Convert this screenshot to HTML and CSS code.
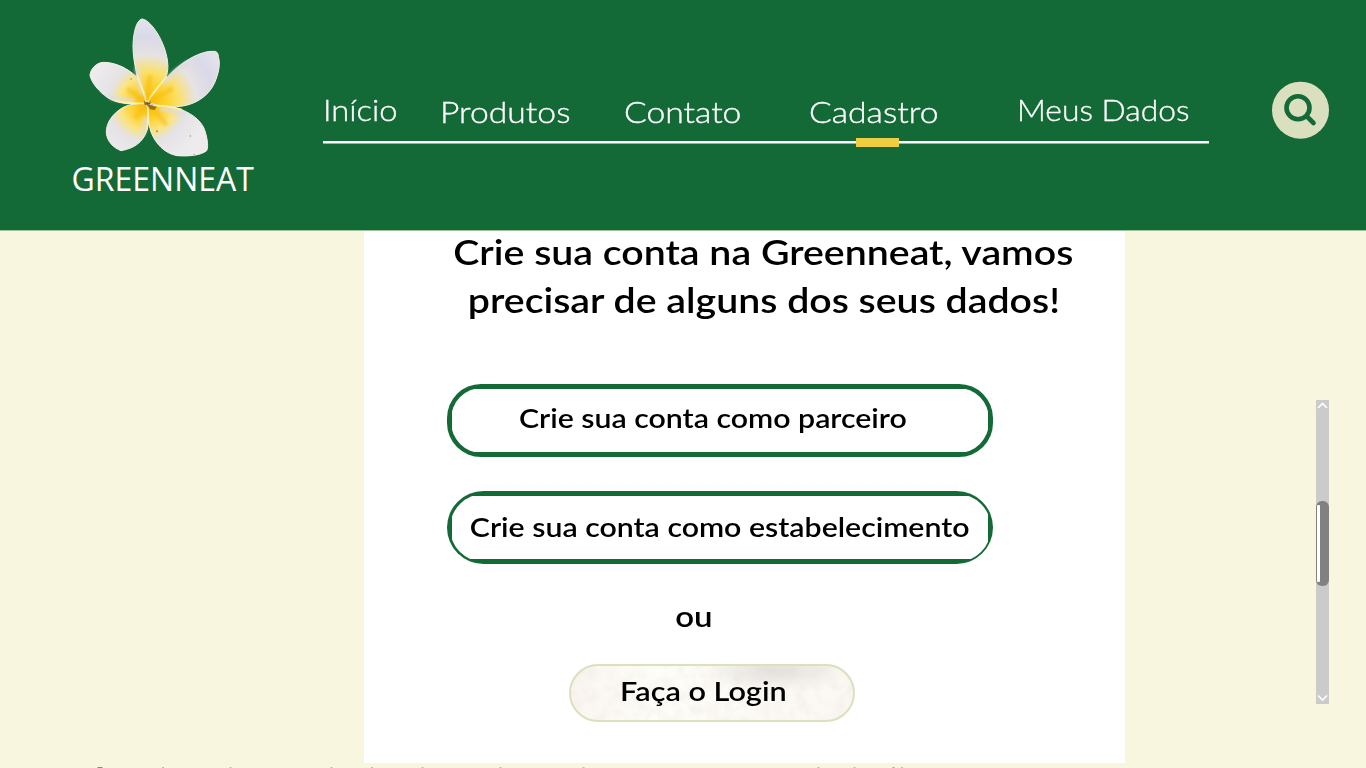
FILE: index.html
```html
<!DOCTYPE html>
<html lang="pt-BR">
<head>
<meta charset="utf-8">
<title>Greenneat - Cadastro</title>
<link rel="stylesheet" href="styles.css">
</head>
<body>
<header class="header">
  <div class="brand">
    <svg class="flower" width="140" height="145" viewBox="75 45 420 435">
      <defs>
        <radialGradient id="petal" gradientUnits="userSpaceOnUse" cx="262" cy="310" r="250">
          <stop offset="0" stop-color="#f6b800"/>
          <stop offset=".2" stop-color="#fdd025"/>
          <stop offset=".38" stop-color="#fbe06a"/>
          <stop offset=".58" stop-color="#e6e3e2"/>
          <stop offset=".8" stop-color="#d9d9e9"/>
          <stop offset="1" stop-color="#e3e2ec"/>
        </radialGradient>
        <radialGradient id="petalShort" gradientUnits="userSpaceOnUse" cx="262" cy="310" r="180">
          <stop offset="0" stop-color="#f5b700"/>
          <stop offset=".25" stop-color="#fdd02b"/>
          <stop offset=".46" stop-color="#fbe480"/>
          <stop offset=".64" stop-color="#e4e2e5"/>
          <stop offset="1" stop-color="#edebec"/>
        </radialGradient>
        <filter id="soft"><feGaussianBlur stdDeviation="5"/></filter>
      </defs>
      <g stroke="#f4f1e6" stroke-width="3" stroke-linejoin="round">
        <path fill="url(#petal)" d="M260 306C235 250 219 190 219 138C220 95 230 60 246 57C266 58 298 99 314 147C326 183 327 215 316 235C300 259 278 284 260 306Z"/>
        <path fill="url(#petal)" d="M263 306C284 276 312 239 344 209C379 178 425 153 458 154C470 153 474 158 475 169C482 192 476 219 464 248C445 291 403 314 362 319C326 323 291 318 263 306Z"/>
        <path fill="url(#petalShort)" d="M258 309C223 314 176 314 143 293C117 276 94 247 90 226C91 206 111 187 131 187C167 187 204 206 228 229C242 249 252 282 258 309Z"/>
        <path fill="url(#petalShort)" d="M259 312C268 336 268 370 260 394C248 426 224 445 183 452C159 443 142 424 139 400C137 369 159 339 190 322C212 311 238 310 259 312Z"/>
        <path fill="url(#petalShort)" d="M264 313C296 318 332 318 359 327C402 343 430 367 437 400C443 421 445 443 440 452C424 465 390 470 351 467C313 460 286 430 273 396C264 367 264 337 264 313Z"/>
      </g>
      <g fill="none" stroke="#dedce0" stroke-width="14" filter="url(#soft)" opacity=".8">
        <path d="M231 200Q236 250 250 285M310 250Q345 212 385 188M150 290Q190 302 225 302M256 350Q257 380 245 405M300 325Q340 330 375 345"/>
      </g>
      <g fill="none" stroke="#fff0a2" stroke-width="5" stroke-linecap="round">
        <path d="M258 295Q240 250 231 224M270 292Q296 257 319 231M248 309Q211 313 166 302M263 322Q266 360 260 389M281 317Q326 317 365 329"/>
      </g>
      <g fill="none" stroke="#f6bd12" stroke-width="14" opacity=".6" filter="url(#soft)">
        <path d="M262 300L270 226M270 304L338 265M250 303L202 266M253 318L225 355M276 325L320 375"/>
      </g>
      <path fill="#8e5808" opacity=".8" d="M252 302L263 310L273 303L269 314L290 320L284 330L270 328L262 316L253 314Z"/>
      <g fill="#a58a5d"><circle cx="291" cy="394" r="3"/><circle cx="391" cy="408" r="2"/><circle cx="213" cy="237" r="2.500"/><circle cx="402" cy="463" r="2"/></g>
    </svg>
    <div class="brand-name">GREENNEAT</div>
  </div>
  <nav class="nav">
    <div class="links">
      <a class="link inicio"><span class="wide">Início</span></a>
      <a class="link low produtos"><span class="wide">Produtos</span></a>
      <a class="link low contato"><span class="wide">Contato</span></a>
      <a class="link low cadastro"><span class="wide">Cadastro</span></a>
      <a class="link meus"><span class="wide">Meus Dados</span></a>
    </div>
    <div class="rule"><span class="marker"></span></div>
  </nav>
  <div class="search">
    <svg width="58" height="58" viewBox="0 0 58 58">
      <circle cx="29.500" cy="29.200" r="28.500" fill="#dadfbf"/>
      <g fill="none" stroke="#146a36" stroke-width="4.600" stroke-linecap="round"><circle cx="27" cy="26.800" r="11.500"/><path d="M36 35.500L42.500 42"/></g>
    </svg>
  </div>
</header>
<main class="main">
  <section class="card">
    <h1 class="title"><span class="wide">Crie sua conta na Greenneat, vamos</span><br><span class="wide">precisar de alguns dos seus dados!</span></h1>
    <button class="option first"><span class="option-face"><span class="wide">Crie sua conta como parceiro</span></span></button>
    <button class="option second"><span class="option-face"><span class="wide">Crie sua conta como estabelecimento</span></span></button>
    <div class="or"><span class="wide">ou</span></div>
    <button class="login">
      <svg class="paper" width="282" height="54"><filter id="grain" x="0" y="0" width="1" height="1"><feTurbulence type="fractalNoise" baseFrequency=".08" numOctaves="5" seed="8"/><feColorMatrix values="0 0 0 0 .72  0 0 0 0 .64  0 0 0 0 .58  .45 0 0 0 -.17"/></filter><rect width="282" height="54" filter="url(#grain)"/></svg>
      <span class="login-text"><span class="wide">Faça o Login</span></span>
    </button>
  </section>
  <div class="scroll">
    <svg width="13" height="12" viewBox="0 0 13 12"><path d="M2 8L6.500 3.500L11 8"/></svg>
    <div class="thumb"><span class="shine"></span></div>
    <svg width="13" height="12" viewBox="0 0 13 12"><path d="M2 3.500L6.500 8L11 3.500"/></svg>
  </div>
</main>
<svg class="footer-edge" width="1366" height="5" viewBox="0 0 1366 5"><path d="M97.500 4.500h5" stroke="#8b8978"/><path d="M162 4.500h2M229.500 4.500h2M330.500 4.500h2M371 4.500h2M421.500 4.500h2M499.500 4.500h2M582.500 4.500h2M817.500 4.500h2M853.500 4.500h2M892 4.500h3M901 4.500h2" stroke="#bebba7"/></svg>
</body>
</html>
```
FILE: styles.css
```css
* { box-sizing: border-box; }
body { margin: 0; width: 1366px; height: 768px; overflow: hidden; background: #f9f6df; font-family: Lato, sans-serif; color: #000; }
.wide { display: inline-block; transform: scaleX(1.122); }
.header { display: flex; height: 231px; background: #146a36; border-bottom: 1px solid #9cc29b; color: #fff; }
.brand { width: 323px; padding: 15px 0 0 71.5px; }
.flower { display: block; margin-left: 13.5px; }
.brand-name { font: 32px/38px "Open Sans", sans-serif; white-space: nowrap; }
.nav { width: 886px; padding-top: 89px; }
.links { display: flex; height: 52px; }
.link { font-size: 30px; font-weight: 300; line-height: 40px; white-space: nowrap; -webkit-text-stroke: .35px #fff; }
.link .wide { transform-origin: left; }
.inicio .wide { transform: scaleX(1.09); }
.meus .wide { transform: scaleX(1.06); }
.low { padding-top: 2px; }
.inicio { width: 117px; }
.produtos { width: 184px; }
.contato { width: 185px; }
.cadastro { width: 208px; }
.rule { height: 3px; background: linear-gradient(#fff 2px, #8fb79b 2px); position: relative; }
.marker { position: absolute; left: 533px; top: -3px; width: 43px; height: 9px; background: #f0ce42; }
.search { padding: 81px 0 0 62px; }
.main { display: flex; height: 532px; padding-left: 364px; }
.card { display: flow-root; width: 761px; height: 532px; background: #fff; }
.title { margin: -4px 0 0; height: 157px; padding-left: 38px; text-align: center; font-size: 35px; line-height: 48px; font-weight: 600; white-space: nowrap; }
.option { display: block; margin: 0 0 34px 83px; width: 546px; height: 73px; border: 0; border-radius: 34px; background: #146a36; color: #000; font: 600 27px/34px Lato, sans-serif; }
.option-face { display: flex; align-items: center; justify-content: center; width: 100%; height: 100%; background: linear-gradient(#fff, #fff) center / 536px 63px no-repeat #146a36; white-space: nowrap; }
.first { padding: 4px; }
.first .option-face { border-radius: 31px; padding: 0 14px 5px 0; }
.second { padding: 2.5px; border-radius: 36.5px; margin-bottom: 0; }
.second .option-face { border-radius: 34px; padding-bottom: 2px; }
.or { margin: 35px 0 31px 283px; width: 94px; height: 34px; text-align: center; font-size: 28px; line-height: 34px; font-weight: 600; }
.or .wide { transform: scaleX(1.18); }
.login { display: grid; margin-left: 205px; width: 286px; height: 58px; padding: 0; border: 2px solid #dbe0bd; border-radius: 29px; overflow: hidden; background: radial-gradient(ellipse 75px 22px at 72% 8%, #e2dfdc, transparent), linear-gradient(90deg, #faf5f0, #fefdf8 30%, #fbf8f3); color: #000; font: 600 27px/50px Lato, sans-serif; }
.paper, .login-text { grid-area: 1 / 1; }
.login-text { position: relative; padding-right: 17px; height: 54px; }
.login-text .wide { transform: scaleX(1.135); }
.scroll { display: flex; flex-direction: column; align-items: center; justify-content: space-between; margin: 169.4px 0 0 191px; width: 13px; height: 304px; background: #cbcbcb; }
.scroll svg { fill: none; stroke: #fff; stroke-width: 1.6; }
.thumb { width: 13px; height: 85px; margin-bottom: 17px; padding: 4px 1px; border-radius: 6px; background: #818181; }
.shine { display: block; width: 3px; height: 77px; border-radius: 1px; background: #fff; }
.footer-edge { display: block; }
```
